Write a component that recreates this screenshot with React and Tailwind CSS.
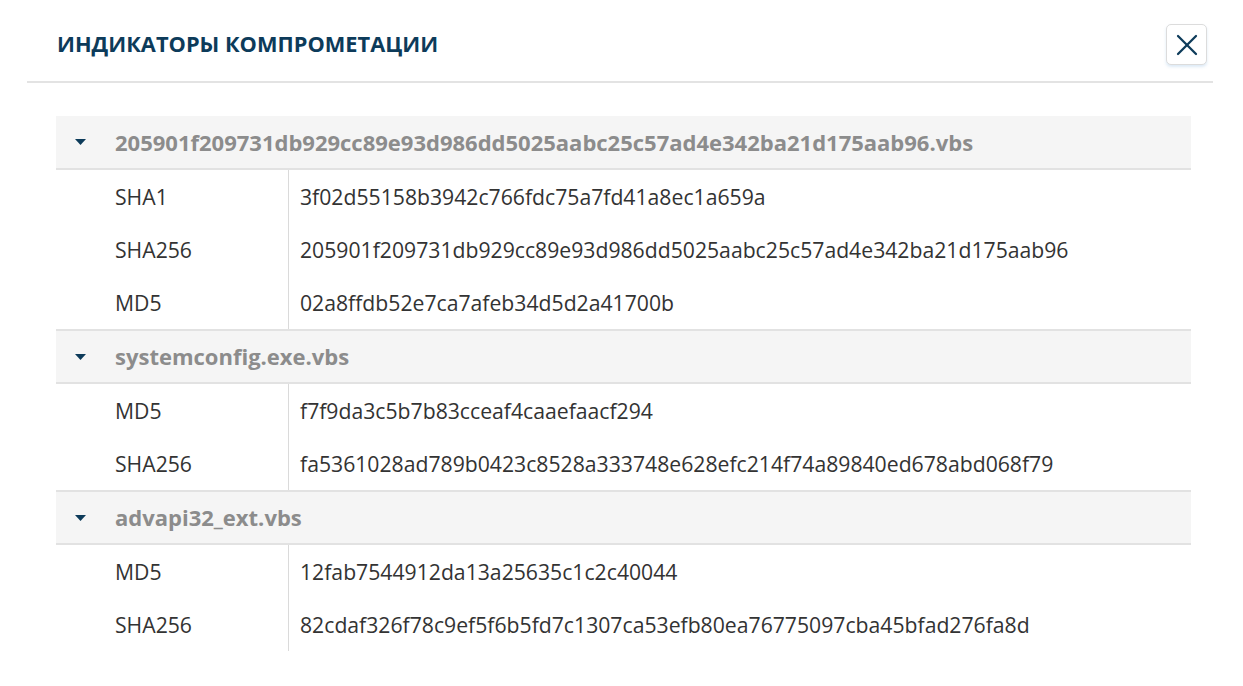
import { X } from "lucide-react";

const groups = [
  {
    name: "205901f209731db929cc89e93d986dd5025aabc25c57ad4e342ba21d175aab96.vbs",
    rows: [
      ["SHA1", "3f02d55158b3942c766fdc75a7fd41a8ec1a659a"],
      ["SHA256", "205901f209731db929cc89e93d986dd5025aabc25c57ad4e342ba21d175aab96"],
      ["MD5", "02a8ffdb52e7ca7afeb34d5d2a41700b"],
    ],
  },
  {
    name: "systemconfig.exe.vbs",
    rows: [
      ["MD5", "f7f9da3c5b7b83cceaf4caaefaacf294"],
      ["SHA256", "fa5361028ad789b0423c8528a333748e628efc214f74a89840ed678abd068f79"],
    ],
  },
  {
    name: "advapi32_ext.vbs",
    rows: [
      ["MD5", "12fab7544912da13a25635c1c2c40044"],
      ["SHA256", "82cdaf326f78c9ef5f6b5fd7c1307ca53efb80ea76775097cba45bfad276fa8d"],
    ],
  },
];

const Caret = () => (
  <svg width="11" height="6" viewBox="0 0 11 6" className="shrink-0">
    <path d="M0 0h11L5.5 6z" fill="#0d3b5a" />
  </svg>
);

export default function App() {
  return (
    <div
      className="w-[1243px] h-[686px] bg-white overflow-hidden"
      style={{ fontFamily: '"Open Sans", "Liberation Sans", sans-serif' }}
    >
      {/* HEADER */}
      <div className="ml-[27px] mr-[30px] h-[83px] pt-[8px] flex items-center justify-between border-b-2 border-[#e3e3e3] pl-[30px] pr-[6px]">
        <h1 className="text-[21.8px] font-bold text-[#0d3b5a]">ИНДИКАТОРЫ КОМПРОМЕТАЦИИ</h1>
        <button className="w-[41px] h-[41px] flex items-center justify-center rounded-[5px] border border-[#dcdcdc] bg-white shadow-[0_2px_3px_rgba(120,170,220,0.25)]">
          <X size={36} strokeWidth={1.5} color="#0d3b5a" className="shrink-0" />
        </button>
      </div>

      {/* TABLE */}
      <div className="ml-[56px] w-[1135px] mt-[33px]">
        {groups.map((g, gi) => (
          <div key={gi}>
            <div
              className={
                "flex items-center bg-[#f5f5f5] border-b-2 border-[#e2e2e2] " +
                (gi > 0 ? "h-[55px] border-t-2" : "h-[54px]")
              }
            >
              <div className="w-[59px] pl-[19px] flex">
                <Caret />
              </div>
              <span className="text-[22px] font-bold text-[#8c8c8c]">{g.name}</span>
            </div>
            {g.rows.map(([k, v], ri) => (
              <div key={ri} className="flex h-[53px] text-[21.2px] text-[#333]">
                <div className="w-[233px] pl-[59px] flex items-center border-r border-[#dadada]">{k}</div>
                <div className="pl-[11px] flex items-center">{v}</div>
              </div>
            ))}
          </div>
        ))}
      </div>
    </div>
  );
}
